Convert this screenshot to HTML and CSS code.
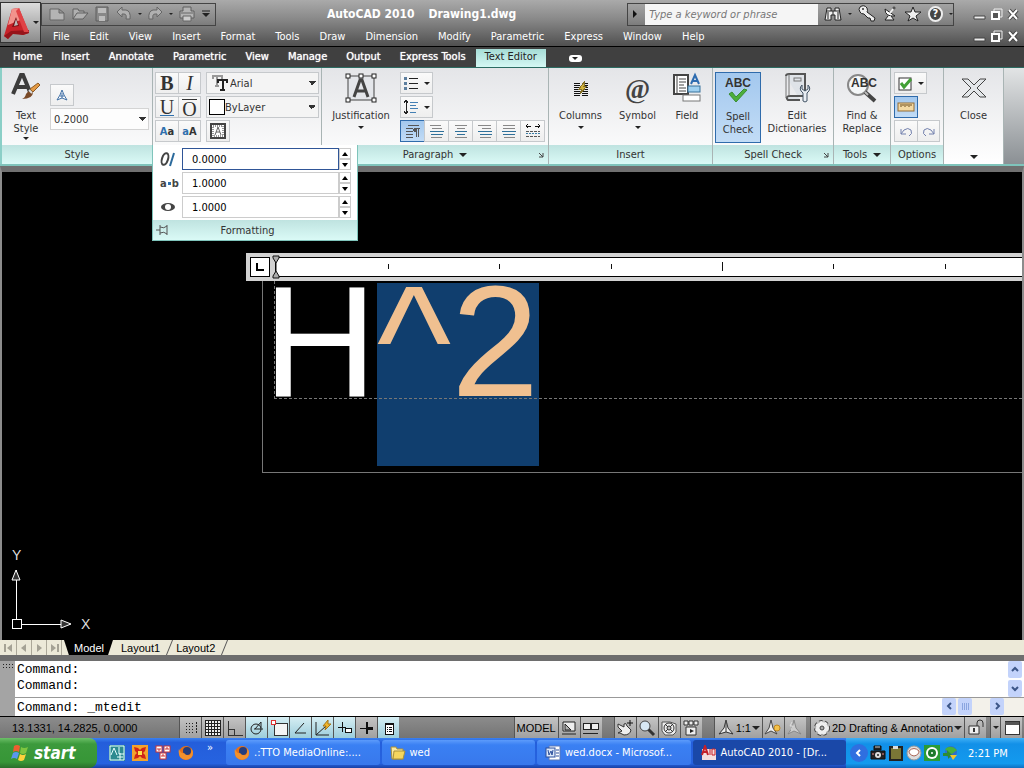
FILE: index.html
```html
<!DOCTYPE html>
<html lang="en">
<head>
  <meta charset="UTF-8">
  <meta name="viewport" content="width=device-width, initial-scale=1.0">
  <title>AutoCAD 2010 - Drawing1.dwg</title>
  <link rel="stylesheet" href="styles.css">
</head>
<body>
  <header class="titlebar">
    <button class="app-button" aria-label="Application menu">
      <svg width="28" height="34" viewBox="0 0 28 34">
        <path d="M9 3 L16 2 L26 27 L20 29 L9 26 L5 33 L1 30 Z" fill="#c8232a"/>
        <path d="M9 3 L16 2 L20 13 L5 19 Z" fill="#f2928c"/>
        <path d="M13 11 L16 20 L9 21 Z" fill="#7a1014"/>
        <path d="M13 13 L15 19 L11 20 Z" fill="#bbb"/>
        <path d="M5 33 L1 30 L8 25 L26 24 L26 27 L20 29 L10 28 Z" fill="#96141a"/>
        <path d="M16 2 L26 26 L21 26 L13 5 Z" fill="#e04346"/>
      </svg>
      <span class="caret"></span>
    </button>
    <div class="title-rows">
      <div class="title-row">
        <div class="quick-access">
          <button aria-label="New"><svg width="18" height="16" viewBox="0 0 18 16"><path d="M2 3 H11 L16 7 V14 H2 Z M11 3 V7 H16" fill="#b4b4b4" stroke="#666"/></svg></button>
          <button aria-label="Open"><svg width="18" height="16" viewBox="0 0 18 16"><path d="M2 13 V3 H7 L8 5 H13 V7 M2 13 L6 7 H17 L12 13 Z" fill="#b0b0b0" stroke="#606060"/></svg></button>
          <button aria-label="Save"><svg width="16" height="16" viewBox="0 0 16 16"><path d="M2 1 H14 V15 H2 Z" fill="#888" stroke="#5e5e5e"/><path d="M4 2 H12 V7 H4 Z M5 10 H11 V15 H5 Z" fill="#bcbcbc"/></svg></button>
          <button aria-label="Undo"><svg width="18" height="16" viewBox="0 0 18 16"><path d="M2 6 L7 1 V4 H11 Q16 5 15 13 H11 Q12 8 9 8 H7 V11 Z" fill="#b0b0b0" stroke="#666"/></svg></button>
          <span class="caret dim"></span>
          <button aria-label="Redo"><svg width="18" height="16" viewBox="0 0 18 16"><path d="M16 6 L11 1 V4 H7 Q2 5 3 13 H7 Q6 8 9 8 H11 V11 Z" fill="#b0b0b0" stroke="#666"/></svg></button>
          <span class="caret dim"></span>
          <button aria-label="Plot"><svg width="18" height="16" viewBox="0 0 18 16"><path d="M5 1 H13 V5 H16 V12 H2 V5 H5 Z" fill="#b4b4b4" stroke="#5e5e5e"/><path d="M5 10 H13 V15 H5 Z" fill="#ccc" stroke="#666"/><path d="M3 7 H15" stroke="#666"/></svg></button>
          <button aria-label="Customize"><svg width="10" height="10" viewBox="0 0 10 10"><path d="M1 2 H9" stroke="#222"/><path d="M1 4 H9 L5 8 Z" fill="#222"/></svg></button>
        </div>
        <h1 class="title"><span>AutoCAD 2010</span> <span>Drawing1.dwg</span></h1>
        <div class="info-center">
          <button aria-label="Collapse"><svg width="8" height="10" viewBox="0 0 8 10"><path d="M2 1 L6 5 L2 9 Z" fill="#111"/></svg></button>
          <input type="text" aria-label="Search" placeholder="Type a keyword or phrase">
          <button aria-label="Find"><svg width="18" height="16" viewBox="0 0 18 16"><path d="M3 2 H7 V5 H11 V2 H15 L17 14 H11 V9 H7 V14 H1 Z" fill="#eee" stroke="#222"/><path d="M3 5 H7 M11 5 H15 M9 5 V9 M4 6 V13 M14 6 V13" stroke="#222"/></svg></button>
          <span class="caret dim"></span>
          <button aria-label="Subscription"><svg width="18" height="18" viewBox="0 0 18 18"><path d="M2 2 Q6 -1 9 3 Q10 6 9 7 L17 13 L16 16 L13 16 L12 13 L10 13 L6 9 Q3 9 2 7 Q0 4 2 2 Z" fill="#eee" stroke="#222"/><circle cx="5" cy="4" r="1" fill="#333"/></svg></button>
          <button aria-label="Communication"><svg width="16" height="16" viewBox="0 0 16 16"><path d="M3 3 Q3 11 13 10 Z" fill="#fff" stroke="#222"/><path d="M8 7 L12 2" stroke="#eee" stroke-width="2"/><path d="M6 10 L3 14 H12 L9 10" fill="#eee" stroke="#222"/><circle cx="12" cy="2" r="1" fill="#eee" stroke="#222"/></svg></button>
          <button aria-label="Favorites"><svg width="18" height="16" viewBox="0 0 18 16"><path d="M9 1 L11 6 L17 6 L12 10 L14 15 L9 12 L4 15 L6 10 L1 6 L7 6 Z" fill="#eee" stroke="#222"/></svg></button>
          <button class="help" aria-label="Help">?</button>
          <span class="caret dim"></span>
        </div>
        <div class="window-buttons">
          <button aria-label="Minimize"><svg width="13" height="13" viewBox="0 0 13 13"><path d="M1 8 H12 V11 H1 Z" fill="#eee" stroke="#444"/></svg></button>
          <button aria-label="Restore"><svg width="13" height="13" viewBox="0 0 13 13"><path d="M4 3 V1 H12 V9 H10" fill="none" stroke="#eee"/><path d="M2 4 H9 V11 H2 Z" fill="#555" stroke="#fff" stroke-width="2"/></svg></button>
          <button aria-label="Close"><svg width="13" height="13" viewBox="0 0 13 13"><path d="M2 2 L10 11 M10 2 L2 11" stroke="#444" stroke-width="4"/><path d="M2 2 L10 11 M10 2 L2 11" stroke="#fff" stroke-width="2"/></svg></button>
        </div>
      </div>
      <div class="menu-row">
        <nav class="menu">
          <a href="#">File</a>
          <a href="#">Edit</a>
          <a href="#">View</a>
          <a href="#">Insert</a>
          <a href="#">Format</a>
          <a href="#">Tools</a>
          <a href="#">Draw</a>
          <a href="#">Dimension</a>
          <a href="#">Modify</a>
          <a href="#">Parametric</a>
          <a href="#">Express</a>
          <a href="#">Window</a>
          <a href="#">Help</a>
        </nav>
        <div class="window-buttons">
          <button aria-label="Minimize drawing"><svg width="13" height="13" viewBox="0 0 13 13"><path d="M1 8 H12 V11 H1 Z" fill="#eee" stroke="#444"/></svg></button>
          <button aria-label="Restore drawing"><svg width="13" height="13" viewBox="0 0 13 13"><path d="M4 3 V1 H12 V9 H10" fill="none" stroke="#eee"/><path d="M2 4 H9 V11 H2 Z" fill="#555" stroke="#fff" stroke-width="2"/></svg></button>
          <button aria-label="Close drawing"><svg width="13" height="13" viewBox="0 0 13 13"><path d="M2 2 L10 11 M10 2 L2 11" stroke="#444" stroke-width="4"/><path d="M2 2 L10 11 M10 2 L2 11" stroke="#fff" stroke-width="2"/></svg></button>
        </div>
      </div>
    </div>
  </header>

  <nav class="ribbon-tabs">
    <a href="#">Home</a>
    <a href="#">Insert</a>
    <a href="#">Annotate</a>
    <a href="#">Parametric</a>
    <a href="#">View</a>
    <a href="#">Manage</a>
    <a href="#">Output</a>
    <a href="#">Express Tools</a>
    <a href="#" class="active">Text Editor</a>
    <button class="ribbon-toggle" aria-label="Minimize ribbon"><span class="caret"></span></button>
  </nav>

  <section class="ribbon">
    <div class="panel panel-style">
      <div class="panel-body">
        <button class="big">
          <svg width="32" height="32" viewBox="0 0 32 32">
            <path d="M3 22 L11 3 H13 L20 20 M7 15 H17" fill="none" stroke="#3c3c3c" stroke-width="4"/>
            <path d="M20 17 L28 11 L30 13 L23 20 Z" fill="#e39a45" stroke="#8d5a22"/>
            <path d="M12 27 Q15 26 16 22 Q19 17 23 20 Q23 27 12 27 Z" fill="#7a4a28"/>
            <path d="M19 18 L22 21" stroke="#ddd" stroke-width="2"/>
          </svg>
          <span>Text<br>Style</span>
          <span class="caret small"></span>
        </button>
        <div class="style-side">
          <button class="tool" aria-label="Annotative"><svg width="16" height="16" viewBox="0 0 16 16"><path d="M8 3 L10 8 L13 13 L8 11 L3 13 L6 8 Z M8 6 V11 M6 9 L10 9" fill="#fff" stroke="#3f6fa5"/></svg></button>
          <select class="combo" aria-label="Text height"><option>0.2000</option></select>
        </div>
      </div>
      <div class="panel-title">Style</div>
    </div>

    <div class="panel panel-format">
      <div class="panel-body rows">
        <div class="row">
          <div class="tools">
            <button class="tool glyph" aria-label="Bold"><b>B</b></button>
            <button class="tool glyph" aria-label="Italic"><i>I</i></button>
          </div>
          <div class="picker">
            <svg width="16" height="16" viewBox="0 0 16 16" class="crisp"><path d="M1 4 V1 H10 V4 M5 1 V10 M3 11 H7" fill="none" stroke="#999" stroke-width="2"/><path d="M6 8 V5 H15 V8 M11 5 V14 M8 15 H13" fill="none" stroke="#222" stroke-width="2"/></svg>
            <select aria-label="Font"><option>Arial</option></select>
          </div>
        </div>
        <div class="row">
          <div class="tools">
            <button class="tool glyph underline" aria-label="Underline"><span>U</span></button>
            <button class="tool glyph overline" aria-label="Overline"><span>O</span></button>
          </div>
          <div class="picker">
            <span class="swatch"></span>
            <select aria-label="Color"><option>ByLayer</option></select>
          </div>
        </div>
        <div class="row">
          <div class="tools">
            <button class="tool case" aria-label="Make uppercase"><em>A</em>a</button>
            <button class="tool case" aria-label="Make lowercase"><em>a</em>A</button>
          </div>
          <button class="tool" aria-label="Background mask"><svg width="16" height="16" viewBox="0 0 16 16"><rect x="1" y="1" width="14" height="14" fill="#fff" stroke="#444" stroke-width="2"/><rect x="3" y="3" width="10" height="10" fill="none" stroke="#333" stroke-dasharray="1 1"/><path d="M5 12 L8 4 L11 12 M6 9 H10" fill="none" stroke="#666"/></svg></button>
        </div>
      </div>
      <div class="slideout">
        <div class="field">
          <label for="oblique"><svg width="20" height="18" viewBox="0 0 20 18"><ellipse cx="7" cy="9" rx="3" ry="6" fill="none" stroke="#444" stroke-width="2" transform="rotate(18 7 9)"/><path d="M12 16 L16 3" stroke="#2b6a9c" stroke-width="2"/></svg></label>
          <input id="oblique" class="focused" type="text" value="0.0000">
          <div class="spin"><button aria-label="Increase oblique angle"></button><button aria-label="Decrease oblique angle"></button></div>
        </div>
        <div class="field">
          <label for="tracking" class="ab">a<em></em>b</label>
          <input id="tracking" type="text" value="1.0000">
          <div class="spin"><button aria-label="Increase tracking"></button><button aria-label="Decrease tracking"></button></div>
        </div>
        <div class="field">
          <label for="width"><svg width="20" height="18" viewBox="0 0 20 18"><ellipse cx="10" cy="9" rx="7" ry="4" fill="#444"/><ellipse cx="10" cy="9" rx="3" ry="3" fill="#fff"/></svg></label>
          <input id="width" type="text" value="1.0000">
          <div class="spin"><button aria-label="Increase width factor"></button><button aria-label="Decrease width factor"></button></div>
        </div>
        <div class="slideout-title">
          <button aria-label="Pin panel"><svg width="14" height="12" viewBox="0 0 14 12"><path d="M0 6 H4 M4 1 V11 M11 1 V11 M4 3 Q8 5 11 2 M4 9 Q8 7 11 10" fill="none" stroke="#555"/></svg></button>
          <span>Formatting</span>
        </div>
      </div>
    </div>

    <div class="panel panel-paragraph">
      <div class="panel-body">
        <button class="big">
          <svg width="32" height="32" viewBox="0 0 32 32"><rect x="3" y="4" width="26" height="24" fill="#e4e6ea" stroke="#444"/><path d="M9 25 L15 8 H17 L23 25 M11 19 H21" fill="none" stroke="#444" stroke-width="3"/><g fill="#fff" stroke="#222"><rect x="1" y="2" width="4" height="4"/><rect x="14" y="2" width="4" height="4"/><rect x="27" y="2" width="4" height="4"/><rect x="1" y="26" width="4" height="4"/><rect x="27" y="26" width="4" height="4"/></g></svg>
          <span>Justification</span>
          <span class="caret small"></span>
        </button>
        <div class="rows">
          <button class="tool wide" aria-label="Bullets and numbering"><svg width="16" height="16" viewBox="0 0 16 16" class="crisp"><path d="M1 3 H4 M1 8 H4 M1 13 H4" stroke="#5d7f9f" stroke-width="3"/><path d="M6 3 H15 M6 8 H15 M6 13 H15" stroke="#222"/></svg><span class="caret small"></span></button>
          <button class="tool wide" aria-label="Line spacing"><svg width="16" height="16" viewBox="0 0 16 16" class="crisp"><path d="M3 2 V14 M1 4 L3 1 L5 4 M1 12 L3 15 L5 12" fill="none" stroke="#222"/><path d="M7 3 H15 M7 6 H13 M7 9 H15 M7 13 H13" stroke="#4480b4"/></svg><span class="caret small"></span></button>
          <div class="tools">
            <button class="tool pressed" aria-label="Default"><svg width="16" height="16" viewBox="0 0 16 16" class="crisp"><path d="M3 2 H14 M1 5 H8 M1 8 H8 M1 11 H8 M1 14 H8" stroke="#555"/><path d="M11 14 V5 M13 14 V5 M9 5 H15" stroke="#555" fill="none"/><path d="M11 5 Q8 5 8 8 Q8 9 11 9 Z" fill="#555"/></svg></button>
            <button class="tool" aria-label="Left"><svg width="16" height="16" viewBox="0 0 16 16" class="crisp"><path d="M1 2 H12 M3 5 H13 M2 14 H13" stroke="#888"/><path d="M1 8 H15 M2 11 H14" stroke="#2f7099"/></svg></button>
            <button class="tool" aria-label="Center"><svg width="16" height="16" viewBox="0 0 16 16" class="crisp"><path d="M2 2 H14 M4 5 H12 M2 14 H14" stroke="#888"/><path d="M2 8 H14 M4 11 H12" stroke="#2f7099"/></svg></button>
            <button class="tool" aria-label="Right"><svg width="16" height="16" viewBox="0 0 16 16" class="crisp"><path d="M1 2 H14 M5 5 H14 M3 14 H14" stroke="#888"/><path d="M1 8 H15 M3 11 H15" stroke="#2f7099"/></svg></button>
            <button class="tool" aria-label="Justify"><svg width="16" height="16" viewBox="0 0 16 16" class="crisp"><path d="M2 2 H14 M2 5 H14 M3 14 H14" stroke="#888"/><path d="M1 8 H15 M2 11 H14" stroke="#2f7099"/></svg></button>
            <button class="tool" aria-label="Distribute"><svg width="16" height="16" viewBox="0 0 16 16" class="crisp"><path d="M1 3 H6 M10 3 H15 M3 1 L1 3 L3 5 M13 1 L15 3 L13 5" fill="none" stroke="#111"/><path d="M1 8 H15 M1 13 H15" stroke="#555" stroke-dasharray="3 1"/><path d="M1 10 H15" stroke="#3d7fa9" stroke-dasharray="2 1"/></svg></button>
          </div>
        </div>
      </div>
      <div class="panel-title">Paragraph <span class="caret"></span><svg class="launcher" width="6" height="6" viewBox="0 0 6 6"><path d="M1 1 L5 5 M5 1 V5 H1" fill="none" stroke="#444"/></svg></div>
    </div>

    <div class="panel panel-insert">
      <div class="panel-body">
        <button class="big">
          <svg width="32" height="32" viewBox="0 0 32 32" class="crisp"><path d="M9 11 H15 M9 13 H15 M9 15 H15 M9 17 H15 M9 19 H15 M9 21 H15 M9 23 H15 M17 11 H23 M17 13 H23 M17 15 H23 M17 17 H23 M17 19 H23 M17 21 H23 M17 23 H23" stroke="#111"/><path d="M20 9 L14 17 L17 17 L15 22 L22 14 L19 14 Z" fill="#d4b43b" stroke="#85702a"/></svg>
          <span>Columns</span>
          <span class="caret small"></span>
        </button>
        <button class="big">
          <span class="at">@</span>
          <span>Symbol</span>
          <span class="caret small"></span>
        </button>
        <button class="big">
          <svg width="32" height="32" viewBox="0 0 32 32"><path d="M3 3 H17 V22 H3 Z" fill="#fff" stroke="#444" stroke-width="2"/><path d="M6 2 V22" stroke="#444"/><path d="M8 7 H15 M8 10 H15 M8 13 H13 M8 16 H15 M8 19 H15" stroke="#444"/><path d="M20 12 L24 3 L28 12 M21 9 H27" fill="none" stroke="#2e6cb0" stroke-width="2"/><rect x="17" y="14" width="12" height="6" fill="#9fd0f0" stroke="#39729c"/><rect x="12" y="23" width="17" height="6" fill="#fff" stroke="#777"/></svg>
          <span>Field</span>
        </button>
      </div>
      <div class="panel-title">Insert</div>
    </div>

    <div class="panel panel-spell">
      <div class="panel-body">
        <button class="big pressed">
          <svg width="32" height="32" viewBox="0 0 32 32"><text class="abc" x="16" y="14" text-anchor="middle">ABC</text><path d="M7 21 L10 19 L14 24 L22 16 L25 17 L14 29 Z" fill="#4caf3c" stroke="#3b8c33"/></svg>
          <span>Spell<br>Check</span>
        </button>
        <button class="big">
          <svg width="32" height="32" viewBox="0 0 32 32"><path d="M5 4 Q5 2 8 2 H24 V24 H8 Q4 25 7 28 H19" fill="#dfe3e8" stroke="#555" stroke-width="2"/><path d="M8 2 V24 M5 4 V26" stroke="#777"/><rect x="13" y="6" width="7" height="3" fill="none" stroke="#777"/><path d="M21 13 V17 L24 19 L27 17 V13 Q31 17 26 21 V29 Q24 31 22 29 V21 Q17 17 21 13 Z" fill="#e8edf3" stroke="#456"/></svg>
          <span>Edit<br>Dictionaries</span>
        </button>
      </div>
      <div class="panel-title">Spell Check<svg class="launcher" width="6" height="6" viewBox="0 0 6 6"><path d="M1 1 L5 5 M5 1 V5 H1" fill="none" stroke="#444"/></svg></div>
    </div>

    <div class="panel panel-tools">
      <div class="panel-body">
        <button class="big">
          <svg width="32" height="32" viewBox="0 0 32 32"><circle cx="12" cy="13" r="10" fill="#f4f7f8" stroke="#888" stroke-width="2"/><path d="M19 20 L29 29" stroke="#444" stroke-width="4"/><path d="M19 20 L22 23" stroke="#bbb" stroke-width="2"/><text class="abc" x="18" y="15" text-anchor="middle">ABC</text></svg>
          <span>Find &amp;<br>Replace</span>
        </button>
      </div>
      <div class="panel-title">Tools <span class="caret"></span></div>
    </div>

    <div class="panel panel-options">
      <div class="panel-body rows">
        <button class="tool wide" aria-label="More options"><svg width="16" height="16" viewBox="0 0 16 16"><rect x="2" y="3" width="12" height="12" fill="#fff" stroke="#333"/><path d="M4 8 L7 12 L14 4" fill="none" stroke="#42a035" stroke-width="3"/></svg><span class="caret small"></span></button>
        <button class="tool pressed" aria-label="Ruler"><svg width="18" height="16" viewBox="0 0 18 16"><rect x="1" y="4" width="16" height="8" fill="#f3d9a4" stroke="#946d34"/><path d="M4 5 V8 M6 5 V7 M8 5 V8 M10 5 V7 M12 5 V8 M14 5 V7" stroke="#6d4d1c"/></svg></button>
        <div class="tools">
          <button class="tool" aria-label="Undo edit"><svg width="16" height="16" viewBox="0 0 16 16"><path d="M3 6 V11 H8 M3 11 L6 7 Q10 4 13 7 Q15 11 11 13" fill="none" stroke="#7280ad"/></svg></button>
          <button class="tool" aria-label="Redo edit"><svg width="16" height="16" viewBox="0 0 16 16"><path d="M13 6 V11 H8 M13 11 L10 7 Q6 4 3 7 Q1 11 5 13" fill="none" stroke="#7280ad"/></svg></button>
        </div>
      </div>
      <div class="panel-title">Options</div>
    </div>

    <div class="panel panel-close">
      <button class="big">
        <svg width="32" height="32" viewBox="0 0 32 32"><path d="M4 7 H10 L16 13 L22 7 H28 L19 16 L28 25 H22 L16 19 L10 25 H4 L13 16 Z" fill="#e4e7ea" stroke="#444"/></svg>
        <span>Close</span>
      </button>
      <span class="caret"></span>
    </div>
  </section>

  <main class="drawing">
    <div class="ruler">
      <button class="tab-stop" aria-label="Tab stop"></button>
      <svg class="indent" width="8" height="24" viewBox="0 0 8 24"><path d="M1 1 H7 V3 L4 8 L1 3 Z M1 23 H7 V21 L4 16 L1 21 Z" fill="#aaa" stroke="#111"/><path d="M4 8 V16" stroke="#111"/></svg>
      <div class="scale">
        <svg width="100%" height="18" class="crisp"><path d="M112 6 V11 M223 6 V11 M335 6 V11 M446 4 V13 M557 6 V11 M669 6 V11" stroke="#111"/></svg>
      </div>
    </div>
    <div class="mtext">
      <div class="mtext-line"><span>H</span><mark>^2</mark></div>
    </div>
    <svg class="ucs" width="90" height="90" viewBox="0 0 90 90">
      <g fill="none" stroke="#fff" class="crisp">
        <rect x="2" y="73" width="9" height="9"/>
        <path d="M6 73 V24 M11 78 H60"/>
      </g>
      <path d="M6 24 L2 34 H10 Z M61 78 L51 74 V82 Z" fill="#333" stroke="#fff"/>
      <text x="2" y="14">Y</text>
      <text x="71" y="83">X</text>
    </svg>
  </main>

  <div class="layout-tabs">
    <div class="tab-nav">
      <button aria-label="First"><svg width="10" height="10" viewBox="0 0 10 10"><path d="M1 1 V9" stroke="#a5a295" stroke-width="2"/><path d="M8 1 V9 L3 5 Z" fill="#a5a295"/></svg></button>
      <button aria-label="Previous"><svg width="10" height="10" viewBox="0 0 10 10"><path d="M7 1 V9 L2 5 Z" fill="#a5a295"/></svg></button>
      <button aria-label="Next"><svg width="10" height="10" viewBox="0 0 10 10"><path d="M3 1 V9 L8 5 Z" fill="#a5a295"/></svg></button>
      <button aria-label="Last"><svg width="10" height="10" viewBox="0 0 10 10"><path d="M9 1 V9" stroke="#a5a295" stroke-width="2"/><path d="M2 1 V9 L7 5 Z" fill="#a5a295"/></svg></button>
    </div>
    <button class="layout-tab active">Model</button>
    <button class="layout-tab">Layout1</button>
    <button class="layout-tab">Layout2</button>
  </div>

  <section class="command">
    <div class="grip"></div>
    <div class="command-body">
      <div class="history">
        <div class="history-text">Command:<br>Command:</div>
        <div class="vscroll">
          <button aria-label="Scroll up"><svg width="9" height="9" viewBox="0 0 9 9"><path d="M1 6 L4 3 L7 6" fill="none" stroke="#3c5688" stroke-width="2"/></svg></button>
          <button aria-label="Scroll down"><svg width="9" height="9" viewBox="0 0 9 9"><path d="M1 3 L4 6 L7 3" fill="none" stroke="#3c5688" stroke-width="2"/></svg></button>
        </div>
      </div>
      <div class="prompt">
        <input type="text" aria-label="Command line" value="Command: _mtedit">
        <div class="hscroll">
          <button aria-label="Scroll left"><svg width="9" height="9" viewBox="0 0 9 9"><path d="M6 1 L3 4 L6 7" fill="none" stroke="#3c5688" stroke-width="2"/></svg></button>
          <button aria-label="Scroll thumb"><svg width="9" height="9" viewBox="0 0 9 9" class="crisp"><path d="M1 1 V8 M3 1 V8 M5 1 V8 M7 1 V8" stroke="#8aa5e0"/></svg></button>
          <span class="track"></span>
          <button aria-label="Scroll right"><svg width="9" height="9" viewBox="0 0 9 9"><path d="M3 1 L6 4 L3 7" fill="none" stroke="#3c5688" stroke-width="2"/></svg></button>
        </div>
      </div>
    </div>
  </section>

  <footer class="status">
    <span class="coords">13.1331, 14.2825, 0.0000</span>
    <div class="status-group">
      <button aria-label="Snap"><svg width="16" height="16" viewBox="0 0 16 16" class="crisp"><path d="M3 3 H11 M3 6 H11 M3 9 H11 M3 12 H11" stroke="#222" stroke-dasharray="1 2"/><path d="M13 2 V13" stroke="#222" stroke-dasharray="2 1"/></svg></button>
      <button aria-label="Grid"><svg width="18" height="18" viewBox="0 0 18 18" class="crisp"><rect x="1" y="1" width="15" height="15" fill="#eee" stroke="#222"/><path d="M4 1 V16 M7 1 V16 M10 1 V16 M13 1 V16 M1 4 H16 M1 7 H16 M1 10 H16 M1 13 H16" stroke="#222"/></svg></button>
      <button aria-label="Ortho"><svg width="18" height="18" viewBox="0 0 18 18" class="crisp"><path d="M2 2 V16 H17 M2 10 H8 V16" fill="none" stroke="#333"/></svg></button>
      <button class="on" aria-label="Polar"><svg width="18" height="18" viewBox="0 0 18 18"><circle cx="8" cy="10" r="5" fill="none" stroke="#222"/><path d="M6 10 H15 M7 10 L13 3 V9" fill="none" stroke="#222"/></svg></button>
      <button class="on" aria-label="Object snap"><svg width="18" height="18" viewBox="0 0 18 18" class="crisp"><rect x="4" y="4" width="13" height="12" fill="#f4f4f4" stroke="#333"/><rect x="1" y="1" width="4" height="4" fill="#fff" stroke="#d33"/></svg></button>
      <button class="on" aria-label="Object snap tracking"><svg width="18" height="18" viewBox="0 0 18 18"><path d="M12 4 L3 14 H14" fill="none" stroke="#222"/></svg></button>
      <button class="on" aria-label="Dynamic UCS"><svg width="18" height="18" viewBox="0 0 18 18"><path d="M2 3 V16 H15 M2 16 L12 7" fill="none" stroke="#222"/><path d="M14 1 L9 7 H12 L11 11 L17 5 H14 Z" fill="#f0b52c" stroke="#a67414"/></svg></button>
      <button class="on" aria-label="Dynamic input"><svg width="18" height="18" viewBox="0 0 18 18" class="crisp"><path d="M2 8 H10 M6 3 V13" stroke="#111"/><rect x="9" y="9" width="6" height="4" fill="#fff" stroke="#111"/></svg></button>
      <button aria-label="Lineweight"><svg width="18" height="18" viewBox="0 0 18 18" class="crisp"><path d="M2 9 H9" stroke="#111"/><path d="M9 9 H15" stroke="#111" stroke-width="3"/><path d="M9 3 V15" stroke="#111" stroke-width="2"/></svg></button>
      <button class="on" aria-label="Quick properties"><svg width="18" height="18" viewBox="0 0 18 18" class="crisp"><rect x="5" y="4" width="8" height="11" fill="#fff" stroke="#111"/><path d="M5 5 H13" stroke="#111" stroke-width="2"/><path d="M7 8 H12 M7 10 H12 M7 12 H12" stroke="#111" stroke-dasharray="1 1 3 1"/></svg></button>
    </div>
    <div class="status-right">
      <div class="status-group spaced">
        <button class="auto">MODEL</button>
        <button aria-label="Model space"><svg width="18" height="18" viewBox="0 0 18 18"><path d="M3 3 H15 V12 H3 Z M5 5 V11 H11 Z M2 15 H16" fill="#eee" stroke="#222"/></svg></button>
        <button aria-label="Quick view layouts"><svg width="18" height="18" viewBox="0 0 18 18" class="crisp"><path d="M1 4 H8 V10 H1 Z M9 4 H16 V10 H9 Z M1 14 H16" fill="#eee" stroke="#222"/></svg></button>
      </div>
      <div class="status-group spaced">
        <button aria-label="Pan"><svg width="18" height="18" viewBox="0 0 18 18"><path d="M2 5 L8 8 V5 Q10 3 11 7 L15 11 Q14 16 8 16 L4 14 H2 L6 12 L2 8 Z" fill="#eee" stroke="#333"/><path d="M14 1 V7 M11 4 H17" stroke="#111"/></svg></button>
        <button aria-label="Zoom"><svg width="18" height="18" viewBox="0 0 18 18"><path d="M10 10 L16 16" stroke="#333" stroke-width="3"/><circle cx="7" cy="7" r="5" fill="#d8e8f4" stroke="#444"/></svg></button>
        <button aria-label="Steering wheel"><svg width="18" height="18" viewBox="0 0 18 18"><path d="M2 3 H10 L16 5 V13 L13 16 H5 L2 12 Z" fill="#eee" stroke="#555"/><circle cx="9" cy="9" r="5" fill="#eee" stroke="#333"/><circle cx="9" cy="9" r="2" fill="#bbb" stroke="#333"/><path d="M5 5 L8 8 M13 5 L10 8 M5 13 L8 10 M13 13 L10 10" stroke="#333"/></svg></button>
        <button aria-label="Show motion"><svg width="18" height="18" viewBox="0 0 18 18"><path d="M2 2 H6 V6 H2 Z M7 2 H11 V6 H7 Z M12 2 H16 V6 H12 Z M4 8 H14 V16 H4 Z" fill="#eee" stroke="#333"/><path d="M8 10 L12 12 L8 14 Z" fill="#222"/></svg></button>
      </div>
      <div class="status-group">
        <button class="auto"><svg width="18" height="18" viewBox="0 0 18 18"><path d="M9 1 L11 9 L16 15 L9 13 L2 15 L7 9 Z M9 4 V13" fill="#eee" stroke="#333"/></svg>1:1<span class="caret"></span></button>
        <button aria-label="Annotation visibility"><svg width="18" height="18" viewBox="0 0 18 18"><path d="M7 1 L9 9 L13 15 L7 12 L1 15 L5 9 Z" fill="#eee" stroke="#444"/><circle cx="13" cy="9" r="3" fill="#f4c24a" stroke="#c08820"/></svg></button>
        <button aria-label="Annotation scale"><svg width="18" height="18" viewBox="0 0 18 18"><path d="M8 1 L10 9 L15 15 L8 12 L2 15 L6 9 Z" fill="#ccc" stroke="#888"/><path d="M6 3 L4 7 H7 L5 11" fill="none" stroke="#ddd"/></svg></button>
      </div>
      <div class="status-group">
        <button class="auto"><svg width="18" height="18" viewBox="0 0 18 18"><circle cx="9" cy="9" r="6" fill="none" stroke="#444" stroke-width="4" stroke-dasharray="3 2"/><circle cx="9" cy="9" r="6" fill="#eee" stroke="#eee" stroke-width="2" stroke-dasharray="3 2"/><circle cx="9" cy="9" r="5" fill="#eee"/><circle cx="9" cy="9" r="2" fill="#aaa" stroke="#444"/></svg>2D Drafting &amp; Annotation<span class="caret"></span></button>
        <button aria-label="Lock"><svg width="18" height="18" viewBox="0 0 18 18"><path d="M10 8 V4 Q10 1 13 1 Q16 1 16 4 V8" fill="none" stroke="#333"/><path d="M2 7 H12 V15 H2 Z" fill="#eee" stroke="#333"/><path d="M7 9 V13" stroke="#333" stroke-width="2"/></svg></button>
      </div>
      <div class="status-group">
        <button class="narrow" aria-label="Status bar menu"><span class="caret small"></span></button>
        <button aria-label="Clean screen"><svg width="18" height="18" viewBox="0 0 18 18" class="crisp"><rect x="2" y="2" width="14" height="13" fill="#fff" stroke="#333"/><path d="M2 4 H16" stroke="#555" stroke-width="3"/></svg></button>
      </div>
    </div>
  </footer>

  <footer class="taskbar">
    <button class="start">
      <svg width="20" height="18" viewBox="0 0 20 18"><path d="M4 2 Q7 0 10 2 L9 8 Q6 6 3 8 Z" fill="#ee5e30"/><path d="M11 3 Q14 5 18 3 L16 9 Q13 11 10 9 Z" fill="#7ec540"/><path d="M3 9 Q6 7 9 9 L7 15 Q4 13 1 15 Z" fill="#5a97ee"/><path d="M10 10 Q13 12 16 10 L14 16 Q11 18 8 16 Z" fill="#fcd23c"/></svg>
      start
    </button>
    <div class="quick-launch">
      <button aria-label="AutoCAD"><svg width="16" height="16" viewBox="0 0 16 16"><rect width="16" height="16" fill="#2c8a90"/><path d="M1 1 H15 V15 H1 Z M2 10 L5 3 L8 10 M10 2 V9 H15 M11 8 V15 M8 12 H14" fill="none" stroke="#e8ffff"/></svg></button>
      <button aria-label="Unikey"><svg width="16" height="16" viewBox="0 0 16 16"><rect width="16" height="16" fill="#f3a32c"/><path d="M2 2 L6 3 L8 5 L10 3 L14 2 L13 6 L11 8 L13 10 L14 14 L10 13 L8 11 L6 13 L2 14 L3 10 L5 8 L3 6 Z" fill="#d12418"/><rect x="6" y="6" width="4" height="4" fill="#ffe14a"/></svg></button>
      <button aria-label="Keyboard"><svg width="16" height="16" viewBox="0 0 16 16"><g fill="#fff" stroke="#c33"><rect x="1" y="1" width="6" height="6"/><rect x="9" y="1" width="6" height="6"/><rect x="5" y="8" width="6" height="6"/></g><path d="M3 3 V5 H5 V3 M11 5 V3 H13 V5 M7 12 V10 H9 V12" fill="none" stroke="#c33"/></svg></button>
      <button aria-label="Firefox"><svg width="16" height="16" viewBox="0 0 16 16"><circle cx="8" cy="8" r="7" fill="#e66f17"/><circle cx="9" cy="6" r="4" fill="#243d7c"/><path d="M1 4 Q3 9 6 8 Q8 11 12 10 Q14 8 13 3 Q17 8 13 13 Q7 17 2 12 Q0 8 1 4 Z" fill="#f2912c"/></svg></button>
      <span class="more">»</span>
    </div>
    <div class="tasks">
      <button class="task"><svg width="16" height="16" viewBox="0 0 16 16"><circle cx="8" cy="8" r="7" fill="#e66f17"/><circle cx="9" cy="6" r="4" fill="#243d7c"/><path d="M1 4 Q3 9 6 8 Q8 11 12 10 Q14 8 13 3 Q17 8 13 13 Q7 17 2 12 Q0 8 1 4 Z" fill="#f2912c"/></svg>.:TTO MediaOnline:....</button>
      <button class="task"><svg width="16" height="16" viewBox="0 0 16 16"><path d="M1 2 H6 L7 4 H13 V14 H2 Z" fill="#fbe9a0" stroke="#a8903a"/><path d="M4 6 H15 L13 14 H3 Z" fill="#f5d65e" stroke="#a8903a"/></svg>wed</button>
      <button class="task"><svg width="16" height="16" viewBox="0 0 16 16"><path d="M4 1 H15 V15 H4 Z" fill="#fff" stroke="#5a78b8"/><rect x="1" y="3" width="9" height="9" fill="#dce8fa" stroke="#2b4f9c"/><path d="M3 5 L4 10 L6 6 L7 10 L8 5 M11 5 H14 M11 8 H14 M11 11 H14" fill="none" stroke="#2b4f9c"/></svg>wed.docx - Microsof...</button>
      <button class="task current"><svg width="16" height="16" viewBox="0 0 16 16"><rect x="1" y="4" width="14" height="11" fill="#f4dede"/><path d="M1 10 L4 1 L7 10 M2 7 H6" fill="none" stroke="#c4202a" stroke-width="2"/><path d="M9 4 V10 M11 4 H14 V10 H11 Z" fill="none" stroke="#c4202a"/></svg>AutoCAD 2010 - [Dr...</button>
    </div>
    <div class="tray">
      <button class="expand" aria-label="Show hidden icons"><svg width="8" height="8" viewBox="0 0 8 8"><path d="M5 1 L2 4 L5 7" fill="none" stroke="#fff" stroke-width="2"/></svg></button>
      <svg width="16" height="16" viewBox="0 0 16 16"><path d="M1 6 H15 V14 H1 Z M4 1 H11 V5 H4 Z" fill="#222" stroke="#111"/><path d="M5 2 H10" stroke="#ccc"/><circle cx="8" cy="10" r="3" fill="#ddd"/><circle cx="8" cy="10" r="1" fill="#222"/><path d="M2 9 H4 M12 9 H14" stroke="#e88"/></svg>
      <svg width="16" height="16" viewBox="0 0 16 16"><rect x="2" y="2" width="12" height="13" fill="#7a7636" stroke="#222" stroke-width="2"/><rect x="5" y="1" width="5" height="3" fill="#ddd"/></svg>
      <svg width="16" height="16" viewBox="0 0 16 16"><circle cx="8" cy="8" r="7" fill="#ddd" stroke="#999"/><path d="M3 6 Q8 1 13 6 Q13 10 8 11 Q3 10 3 6" fill="#fff" stroke="#a65"/></svg>
      <svg width="16" height="16" viewBox="0 0 16 16"><rect width="16" height="16" fill="#2a9b36"/><circle cx="8" cy="8" r="6" fill="#fff"/><circle cx="8" cy="8" r="4" fill="#1d7a2c"/><circle cx="8" cy="8" r="1" fill="#fff"/></svg>
      <svg width="16" height="16" viewBox="0 0 16 16"><circle cx="9" cy="7" r="6" fill="#2f6fc8"/><path d="M3 4 Q9 -1 15 5 L10 9 L6 7 Z" fill="#48b03c"/><path d="M1 8 H5 V5 L10 10 L6 14 V11 H1 Z" fill="#2c8c34"/><path d="M8 10 H15 L11 15 Z" fill="#f0c62e"/></svg>
      <time>2:21 PM</time>
    </div>
  </footer>
</body>
</html>
```
FILE: styles.css
```css
* {
  box-sizing: border-box;
}
body {
  margin: 0;
  height: 100vh;
  display: flex;
  flex-direction: column;
  overflow: hidden;
  font-family: "DejaVu Sans Condensed", "Noto Sans", sans-serif;
  font-size: 11px;
  color: #333;
  background: #000;
}
button, input, select {
  font: inherit;
  color: inherit;
  margin: 0;
  padding: 0;
  border: 0;
  background: none;
}
a {
  color: inherit;
  text-decoration: none;
}
svg {
  display: block;
  flex: none;
}
.crisp {
  shape-rendering: crispEdges;
}
.caret {
  display: inline-block;
  flex: none;
  border: 4px solid transparent;
  border-top-color: #222;
  border-bottom: 0;
}
.caret.small {
  border-width: 3px;
  border-bottom: 0;
}
.caret.dim {
  border-width: 2px;
  border-bottom: 0;
}

/* title bar */
.titlebar {
  flex: none;
  display: flex;
  height: 47px;
  padding-top: 2px;
  background: linear-gradient(#aaa, #8a8a8a 40%, #505050);
  border-bottom: 1px solid #000;
  color: #fff;
}
.app-button {
  width: 41px;
  height: 41px;
  display: flex;
  align-items: center;
  justify-content: center;
  gap: 2px;
  border: 1px solid #333;
  background: linear-gradient(#ddd, #8c8c8c);
}
.app-button .caret {
  border-width: 3px;
  border-bottom: 0;
}
.title-rows {
  flex: 1;
  min-width: 0;
}
.title-row,
.menu-row {
  display: flex;
  align-items: center;
  justify-content: space-between;
}
.title-row {
  height: 24px;
}
.menu-row {
  height: 21px;
}
.quick-access,
.info-center {
  display: flex;
  align-items: center;
  height: 23px;
  border: 1px solid #444;
}
.quick-access {
  width: 175px;
  justify-content: space-between;
  padding: 0 4px 0 6px;
}
.title {
  margin: 0;
  display: flex;
  gap: 14px;
  font-size: 12px;
  font-weight: bold;
}
.info-center {
  width: 327px;
  gap: 6px;
  padding-left: 3px;
}
.info-center input {
  width: 179px;
  height: 21px;
  padding: 0 4px;
  background: #f5f5f5;
}
.info-center input::placeholder {
  color: #777;
  font-style: italic;
}
.title-row .window-buttons {
  margin-left: -92px;
}
.help {
  width: 16px;
  height: 16px;
  border: 2px solid #eee;
  border-radius: 50%;
  background: #444;
  color: #fff;
  font-weight: bold;
  line-height: 12px;
}
.window-buttons {
  display: flex;
  gap: 4px;
  padding-right: 4px;
}
.menu {
  display: flex;
  gap: 20px;
  padding-left: 12px;
}

/* ribbon tabs */
.ribbon-tabs {
  flex: none;
  display: flex;
  gap: 1px;
  height: 20px;
  padding-left: 4px;
  background: #404040;
  color: #fff;
  line-height: 20px;
}
.ribbon-tabs a {
  padding: 0 9px;
  text-shadow: 0 0 1px #fff;
}
.ribbon-tabs .active {
  margin-top: 2px;
  line-height: 16px;
  background: linear-gradient(#a5dcd6, #d5f8f4);
  color: #222;
  text-shadow: none;
}
.ribbon-toggle {
  width: 13px;
  height: 7px;
  margin: 8px 0 0 22px;
  border-radius: 3px;
  background: #fff;
  line-height: 0;
}
.ribbon-toggle .caret {
  border-width: 3px;
  border-bottom: 0;
}

/* ribbon */
.ribbon {
  flex: none;
  display: flex;
  position: relative;
  z-index: 1;
  height: 99px;
  background: linear-gradient(#e2e4e5, #8b9094);
  border-top: 1px solid #2c6c62;
  border-bottom: 2px solid #7fc4bb;
}
.panel {
  flex: none;
  display: flex;
  flex-direction: column;
  border-right: 1px solid #a9b4b4;
  background: linear-gradient(#e4e5e8, #fff);
}
.panel-style { width: 153px; border-left: 2px solid #8bcfc7; }
.panel-format { width: 169px; }
.panel-paragraph { width: 227px; }
.panel-insert { width: 164px; }
.panel-spell { width: 121px; }
.panel-tools { width: 57px; }
.panel-options { width: 53px; }
.panel-close {
  width: 60px;
  align-items: center;
  justify-content: space-between;
  padding: 4px 0 5px;
}
.panel-body {
  display: flex;
  height: 77px;
  padding-top: 4px;
}
.panel-title {
  flex: 1;
  display: flex;
  align-items: center;
  justify-content: center;
  gap: 6px;
  position: relative;
  background: linear-gradient(#bfe3e0, #dafaf6);
}
.launcher {
  position: absolute;
  right: 4px;
  bottom: 6px;
}
.rows {
  display: flex;
  flex-direction: column;
  align-items: flex-start;
  gap: 2px;
}
.row {
  display: flex;
  gap: 5px;
}
.tools {
  display: flex;
}
.big {
  display: flex;
  flex-direction: column;
  align-items: center;
  height: 71px;
  line-height: 13px;
  text-align: center;
}
.big svg {
  margin-bottom: 5px;
}
.big .caret {
  margin-top: 4px;
}
.tool {
  width: 24px;
  height: 22px;
  display: flex;
  align-items: center;
  justify-content: center;
  border: 1px solid #c6c9cc;
  background: linear-gradient(#fafafa, #eee);
}
.tools .tool + .tool {
  margin-left: -1px;
  width: 23px;
}
.panel-paragraph .tools .tool,
.panel-paragraph .tools .tool + .tool {
  width: 25px;
}
.tool.wide {
  width: 33px;
  gap: 5px;
}
.pressed,
.tool.pressed {
  border: 1px solid #2f6bab;
  background: linear-gradient(#a3c8ee, #c2dcf6);
}
.abc {
  font: bold 12px "Liberation Sans", sans-serif;
  fill: #333;
}
.at {
  height: 32px;
  margin-bottom: 5px;
  font: bold 27px/34px "Liberation Serif", serif;
  color: #444;
}

.panel-style .panel-body {
  gap: 2px;
  padding-left: 2px;
}
.panel-style .big {
  width: 44px;
}
.panel-style .big .caret {
  margin-top: 2px;
}
.style-side {
  display: flex;
  flex-direction: column;
  gap: 2px;
  padding-top: 12px;
}
select {
  appearance: none;
}
.combo,
.picker {
  background-image: conic-gradient(from -45deg at 50% 100%, #333 90deg, transparent 0);
  background-repeat: no-repeat;
  background-size: 8px 4px;
  background-position: right 2px center;
}
.combo {
  width: 99px;
  height: 22px;
  padding-left: 3px;
  border: 1px solid #d4d4d4;
  background-color: #fdfdfd;
}

.panel-format {
  position: relative;
}
.panel-format .panel-body {
  padding-left: 2px;
}
.glyph {
  font: 20px/20px "Liberation Serif", serif;
}
.underline span {
  height: 17px;
  line-height: 17px;
  border-bottom: 1px solid #2f70ad;
}
.overline span {
  height: 17px;
  line-height: 18px;
  border-top: 1px solid #333;
}
.case {
  font-weight: bold;
}
.case em {
  color: #2f70ad;
  font-style: normal;
}
.picker {
  display: flex;
  align-items: center;
  width: 113px;
  height: 22px;
  padding-left: 2px;
  border: 1px solid #c6c9cc;
  background-color: #f4f4f4;
}
.picker select {
  flex: 1;
}
.picker svg {
  margin: 0 2px 0 3px;
}
.swatch {
  width: 16px;
  height: 16px;
  border: 1px solid #000;
  background: #fff;
}
.slideout {
  position: absolute;
  z-index: 2;
  top: 77px;
  left: -1px;
  width: 206px;
  padding-top: 3px;
  display: flex;
  flex-direction: column;
  gap: 2px;
  border: 1px solid #7fc4bb;
  border-top: 0;
  background: #fff;
}
.field {
  display: flex;
  height: 22px;
  padding: 0 6px 0 5px;
  color: #000;
}
.field label {
  width: 24px;
  display: flex;
  align-items: center;
}
.field .ab {
  padding-left: 2px;
  gap: 1px;
  color: #444;
  font-weight: bold;
}
.ab em {
  width: 3px;
  height: 3px;
  background: #2f70ad;
}
.field input {
  flex: 1;
  min-width: 0;
  padding-left: 9px;
  border: 1px solid #ccc;
}
.field .focused {
  border: 1px solid #2f5597;
}
.spin {
  width: 12px;
  display: flex;
  flex-direction: column;
}
.spin button {
  flex: 1;
  display: flex;
  align-items: center;
  justify-content: center;
  border: 1px solid #ccc;
}
.spin button::before {
  content: "";
  border: 3px solid transparent;
  border-top: 0;
  border-bottom: 4px solid #000;
}
.spin button + button::before {
  border-top: 4px solid #000;
  border-bottom: 0;
}
.slideout-title {
  display: flex;
  align-items: center;
  height: 20px;
  padding-left: 3px;
  background: linear-gradient(#bfe3e0, #dafaf6);
}
.slideout-title span {
  flex: 1;
  padding-right: 32px;
  text-align: center;
}

.panel-paragraph .big {
  width: 78px;
}
.panel-insert .panel-body {
  padding-left: 3px;
}
.panel-insert .big {
  width: 57px;
}
.panel-insert .big + .big + .big {
  width: 42px;
}
.panel-spell .big {
  width: 70px;
}
.panel-spell .panel-body {
  gap: 1px;
  padding-left: 2px;
}
.panel-spell .pressed {
  width: 46px;
}
.panel-tools .big {
  flex: 1;
}
.panel-options .panel-body {
  padding-left: 3px;
}

/* drawing area */
.drawing {
  flex: 1;
  min-height: 0;
  position: relative;
  overflow: hidden;
  border: 2px solid #8c8c8c;
  border-top: 6px solid #707070;
  border-bottom: 0;
  background: #000;
}
.ruler {
  position: absolute;
  top: 81px;
  left: 244px;
  right: 0;
  height: 28px;
  display: flex;
  align-items: center;
  padding-left: 4px;
  background: #d2d2d2;
}
.tab-stop {
  width: 20px;
  height: 20px;
  display: flex;
  align-items: center;
  justify-content: center;
  border: 1px solid #000;
  background: #fff;
}
.tab-stop::before {
  content: "";
  width: 6px;
  height: 6px;
  border: 2px solid #000;
  border-top: 0;
  border-right: 0;
}
.indent {
  margin: 0 -5px 0 2px;
  z-index: 1;
}
.scale {
  flex: 1;
  height: 20px;
  border: 1px solid #000;
  border-right: 0;
  background: #fff;
}
.mtext {
  position: absolute;
  top: 109px;
  left: 260px;
  right: 0;
  height: 192px;
  padding-top: 2px;
  border-left: 1px solid #777;
  border-bottom: 1px solid #777;
}
.mtext::before {
  content: "";
  position: absolute;
  top: 0;
  left: 11px;
  right: 0;
  height: 117px;
  border-left: 1px dashed #777;
  border-bottom: 1px dashed #777;
}
.mtext-line {
  display: flex;
  height: 183px;
  font: 158px/117px "Liberation Sans", Arial, sans-serif;
  color: #fff;
}
.mtext mark {
  background: #103e6e;
  color: #f0c090;
}
.ucs {
  position: absolute;
  left: 8px;
  bottom: 4px;
}
.ucs text {
  font: 14px "Liberation Sans", sans-serif;
  fill: #ddd;
}

/* layout tabs */
.layout-tabs {
  flex: none;
  display: flex;
  height: 15px;
  padding-left: 2px;
  background: #ece9d8;
  font-family: "Liberation Sans", Arial, sans-serif;
  color: #000;
}
.tab-nav {
  display: flex;
}
.tab-nav button {
  width: 15px;
  padding-left: 2px;
  border-right: 1px solid #aca899;
}
.layout-tab {
  position: relative;
  padding: 0 8px;
}
.layout-tab::after {
  content: "";
  position: absolute;
  top: 0;
  right: -2px;
  height: 15px;
  border-right: 1px solid #555;
  transform: skewX(-22deg);
}
.layout-tab.active {
  margin-left: 2px;
  padding: 0 9px 0 10px;
  background: #000;
  clip-path: polygon(0 0, 100% 0, 90% 100%, 10% 100%);
  color: #fff;
}

/* command window */
.command {
  flex: none;
  display: flex;
  height: 61px;
  border-top: 6px solid #6e6e6e;
  background: #a4a4a4;
  font-family: "Liberation Mono", "Courier New", monospace;
  font-size: 13px;
  color: #000;
}
.grip {
  width: 15px;
  height: 10px;
  border: 2px solid transparent;
  background: radial-gradient(#222 1px, transparent 1px) 0 0 / 3px 3px content-box;
}
.command-body {
  flex: 1;
  background: #fff;
}
.history {
  display: flex;
  height: 37px;
  border-bottom: 1px solid #999;
}
.history-text {
  flex: 1;
  padding: 1px 0 0 2px;
  line-height: 16px;
}
.vscroll {
  width: 16px;
  display: flex;
  flex-direction: column;
  justify-content: space-between;
}
.vscroll button,
.hscroll button {
  width: 14px;
  height: 17px;
  display: flex;
  align-items: center;
  justify-content: center;
  border-radius: 2px;
  background: #c3d3fb;
}
.prompt {
  display: flex;
  height: 18px;
}
.prompt input {
  flex: 1;
  padding-left: 2px;
}
.hscroll {
  display: flex;
  gap: 2px;
  padding-right: 20px;
  background: #f3f1ea;
}
.hscroll .track {
  width: 14px;
}

/* status bar */
.status {
  flex: none;
  display: flex;
  height: 22px;
  border-top: 1px solid #000;
  background: linear-gradient(#8c8c8c, #747474);
  font-family: "Liberation Sans", Arial, sans-serif;
  color: #000;
}
.coords {
  width: 179px;
  padding-left: 12px;
  line-height: 23px;
}
.status-group {
  display: flex;
}
.status-group button {
  width: 22px;
  display: flex;
  align-items: center;
  justify-content: center;
  border-left: 1px solid #555;
  background: linear-gradient(#c4c4c4, #a0a0a0);
}
.status-group .on {
  background: linear-gradient(#d6eef3, #9ccddb);
}
.status-group .auto {
  width: auto;
  padding: 0 2px;
  gap: 1px;
}
.status-group .narrow {
  width: 10px;
}
.status-right {
  flex: 1;
  display: flex;
  justify-content: flex-end;
  gap: 4px;
  padding-right: 2px;
}
.status-group.spaced {
  margin-right: 8px;
}

/* taskbar */
.taskbar {
  flex: none;
  display: flex;
  height: 30px;
  background: linear-gradient(#3a80f0, #245edb 15%, #2663e0 85%, #1941a5);
  color: #fff;
}
.start {
  width: 97px;
  display: flex;
  align-items: center;
  gap: 4px;
  padding-left: 10px;
  border-radius: 0 8px 8px 0;
  background: linear-gradient(#6cbf68, #3c9a3c 20%, #379637 80%, #2a6e2a);
  font-size: 17px;
  font-weight: bold;
  font-style: italic;
}
.quick-launch {
  width: 129px;
  display: flex;
  align-items: center;
  gap: 7px;
  padding-left: 12px;
}
.more {
  margin: -12px 0 0 6px;
}
.tasks {
  flex: 1;
  min-width: 0;
  display: flex;
  gap: 2px;
}
.task {
  flex: 1;
  min-width: 0;
  height: 25px;
  margin-top: 2px;
  display: flex;
  align-items: center;
  gap: 4px;
  padding-left: 8px;
  border-radius: 3px;
  background: linear-gradient(#5c9bfb, #3a80f3 20%, #3878ec);
  white-space: nowrap;
}
.task.current {
  background: #1a48a8;
}
.tray {
  width: 178px;
  display: flex;
  align-items: center;
  gap: 2px;
  padding-left: 4px;
  background: linear-gradient(#3fb0f5, #1290e8 20%, #139aee 85%, #0f6fc0);
}
.expand {
  width: 18px;
  height: 18px;
  display: flex;
  align-items: center;
  justify-content: center;
  border-radius: 50%;
  background: #2f6fe0;
}
.tray time {
  margin-left: 8px;
}
```
